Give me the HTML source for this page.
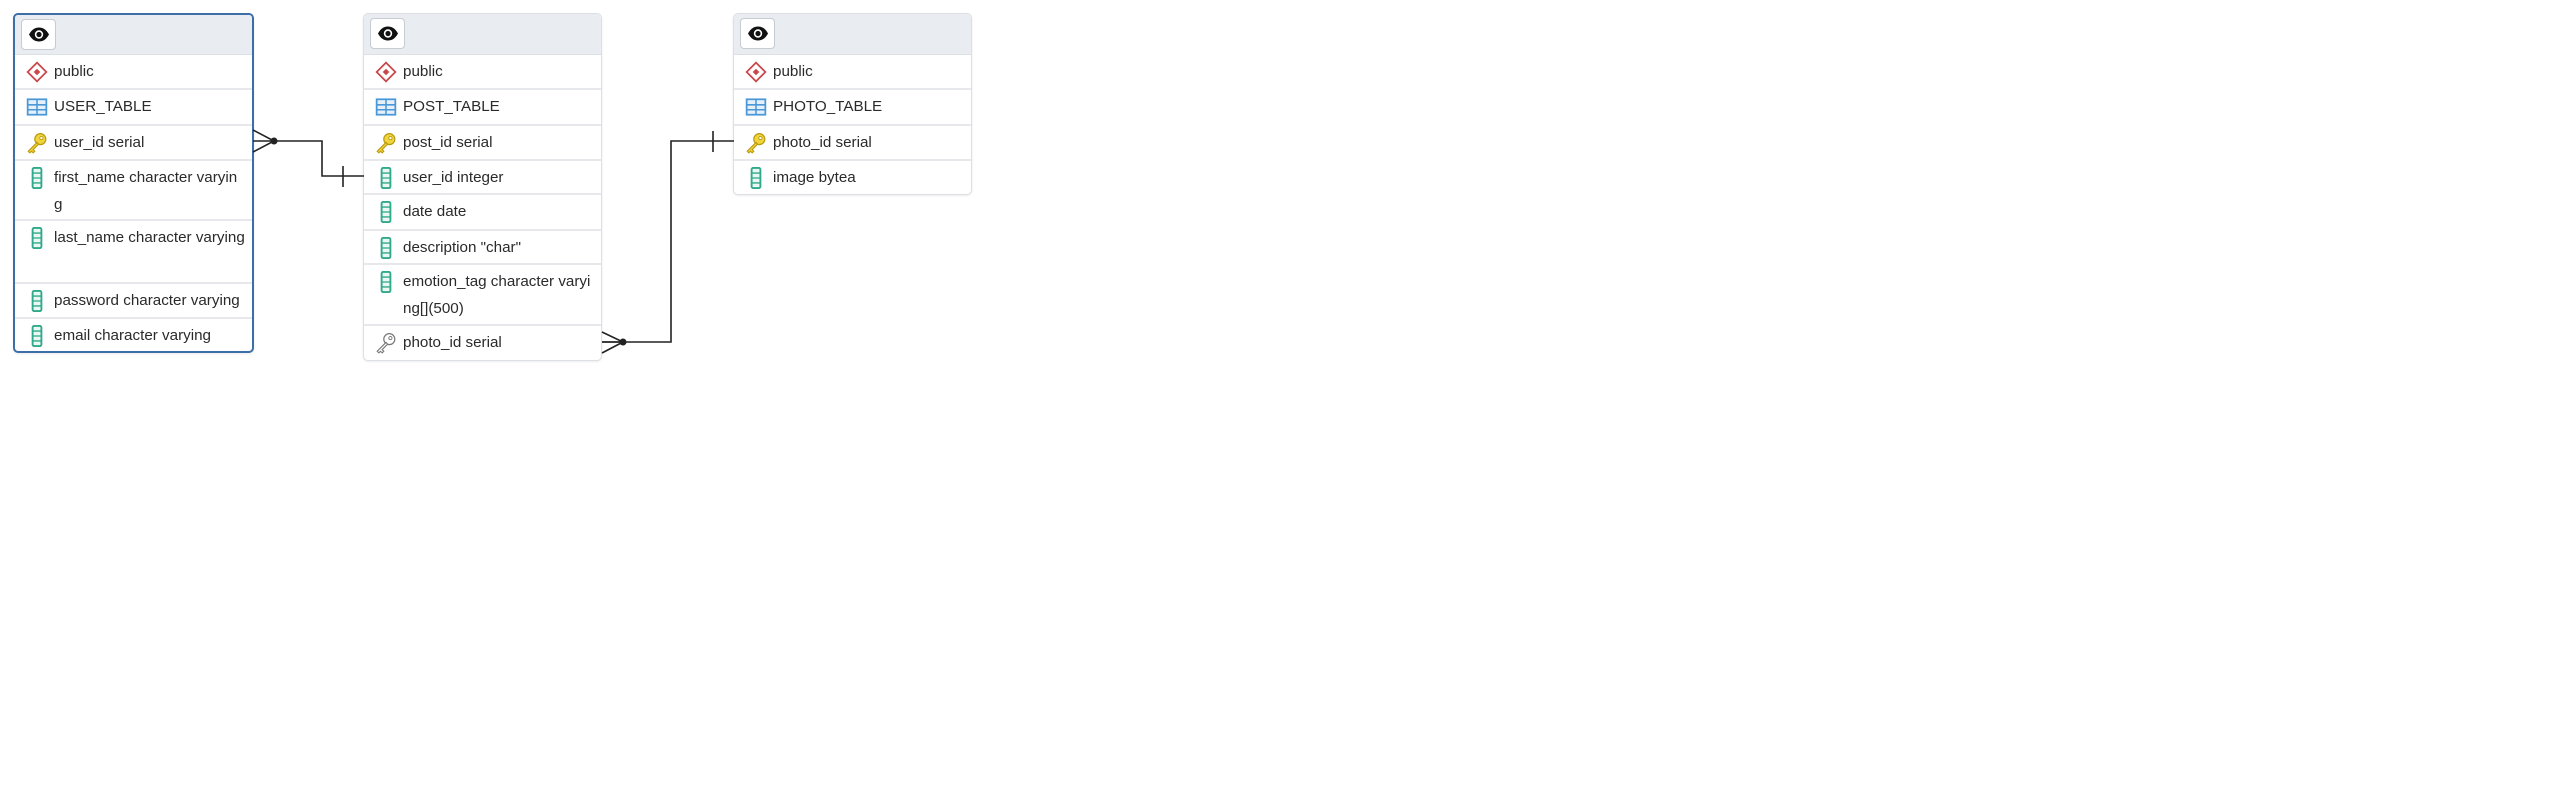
<!DOCTYPE html>
<html><head><meta charset="utf-8"><style>
body{margin:0;width:2563px;height:788px;background:#fff;position:relative;overflow:hidden;font-family:"Liberation Sans",sans-serif;}
.t{position:absolute;background:#fff;border:1px solid #dcdfe4;border-radius:5px;box-sizing:border-box;overflow:hidden;box-shadow:0 1px 2px rgba(0,0,0,.08)}
.t.sel{border:2px solid #3c6ea8}
.hd{height:40px;background:#e9ecf1;position:relative;border-bottom:1px solid #dcdfe4}
.eye{position:absolute;left:6px;top:4px;width:35px;height:31px;background:#fff;border:1px solid #c7cbd2;border-radius:4px;box-sizing:border-box}
.eye svg{position:absolute;left:6px;top:6px}
.r{position:relative;border-bottom:2px solid #e6e8ec;box-sizing:border-box;font-size:15.2px;color:#2a2a2a;}
.r:last-child{border-bottom:none}
.r .ic{position:absolute;left:11px;top:6px;width:22px;height:22px}
.r .tx{position:absolute;left:39px;top:3px;right:3px;line-height:27px;word-break:break-all}
</style></head><body>
<svg width="0" height="0" style="position:absolute">
<defs>
<symbol id="eye" viewBox="0 0 22 16"><path d="M1 8C4 2.5 7.5 1 11 1s7 1.5 10 7c-3 5.5-6.5 7-10 7S4 13.5 1 8z" fill="#111"/><circle cx="11" cy="8" r="4.2" fill="#fff"/><circle cx="11" cy="8" r="2.6" fill="#111"/></symbol>
<symbol id="sch" viewBox="0 0 20 20"><path d="M10 1.5L18.5 10 10 18.5 1.5 10z" fill="#fff" stroke="#c9484a" stroke-width="1.6"/><path d="M10 7L13 10 10 13 7 10z" fill="#c9484a"/></symbol>
<symbol id="tbl" viewBox="0 0 20 20"><rect x="1.5" y="3" width="17" height="14" fill="#e6f0fa" stroke="#4a98d8" stroke-width="1.6"/><path d="M1.5 8h17M1.5 12.5h17M10 3v14" stroke="#4a98d8" stroke-width="1.4"/></symbol>
<symbol id="key" viewBox="0 0 20 20"><circle cx="13" cy="6.5" r="5" fill="#f2d43c" stroke="#b89a10" stroke-width="1.1"/><circle cx="14" cy="5.5" r="1.5" fill="#fff" stroke="#b89a10" stroke-width=".8"/><path d="M10 9.5L2 17.5l1.5 1.5 1.5-1.5 1.5 1.5 1.5-1.5-1.5-1.5 1.5-1.5L11.5 11z" fill="#f2d43c" stroke="#b89a10" stroke-width="1"/></symbol>
<symbol id="fk" viewBox="0 0 20 20"><circle cx="13" cy="6.5" r="5" fill="#fff" stroke="#777" stroke-width="1.1"/><circle cx="14" cy="5.5" r="1.5" fill="#fff" stroke="#777" stroke-width=".8"/><path d="M10 9.5L2 17.5l1.5 1.5 1.5-1.5 1.5 1.5 1.5-1.5-1.5-1.5 1.5-1.5L11.5 11z" fill="#fff" stroke="#777" stroke-width="1"/></symbol>
<symbol id="col" viewBox="0 0 20 20"><rect x="6" y="0.8" width="8" height="18.4" rx="1.5" fill="#eaf7f2" stroke="#2fa98a" stroke-width="1.7"/><path d="M6 5.5h8M6 10h8M6 14.5h8" stroke="#2fa98a" stroke-width="1.2"/></symbol>
</defs></svg>

<!-- USER TABLE -->
<div class="t sel" style="left:13px;top:13px;width:241px;height:340px">
<div class="hd" style="height:39px"><div class="eye"><svg width="22" height="17"><use href="#eye"/></svg></div></div>
<div class="r" style="height:35px"><svg class="ic"><use href="#sch"/></svg><div class="tx">public</div></div>
<div class="r" style="height:36px"><svg class="ic"><use href="#tbl"/></svg><div class="tx">USER_TABLE</div></div>
<div class="r" style="height:35px"><svg class="ic"><use href="#key"/></svg><div class="tx">user_id serial</div></div>
<div class="r" style="height:60px"><svg class="ic"><use href="#col"/></svg><div class="tx">first_name character varyin<br>g</div></div>
<div class="r" style="height:63px"><svg class="ic"><use href="#col"/></svg><div class="tx">last_name character varying</div></div>
<div class="r" style="height:35px"><svg class="ic"><use href="#col"/></svg><div class="tx">password character varying</div></div>
<div class="r" style="height:35px"><svg class="ic"><use href="#col"/></svg><div class="tx">email character varying</div></div>
</div>

<!-- POST TABLE -->
<div class="t" style="left:363px;top:13px;width:239px;height:348px">
<div class="hd"><div class="eye"><svg width="22" height="17"><use href="#eye"/></svg></div></div>
<div class="r" style="height:35px"><svg class="ic"><use href="#sch"/></svg><div class="tx">public</div></div>
<div class="r" style="height:36px"><svg class="ic"><use href="#tbl"/></svg><div class="tx">POST_TABLE</div></div>
<div class="r" style="height:35px"><svg class="ic"><use href="#key"/></svg><div class="tx">post_id serial</div></div>
<div class="r" style="height:34px"><svg class="ic"><use href="#col"/></svg><div class="tx">user_id integer</div></div>
<div class="r" style="height:36px"><svg class="ic"><use href="#col"/></svg><div class="tx">date date</div></div>
<div class="r" style="height:34px"><svg class="ic"><use href="#col"/></svg><div class="tx">description "char"</div></div>
<div class="r" style="height:61px"><svg class="ic"><use href="#col"/></svg><div class="tx">emotion_tag character varyi<br>ng[](500)</div></div>
<div class="r" style="height:36px"><svg class="ic"><use href="#fk"/></svg><div class="tx">photo_id serial</div></div>
</div>

<!-- PHOTO TABLE -->
<div class="t" style="left:733px;top:13px;width:239px;height:182px">
<div class="hd"><div class="eye"><svg width="22" height="17"><use href="#eye"/></svg></div></div>
<div class="r" style="height:35px"><svg class="ic"><use href="#sch"/></svg><div class="tx">public</div></div>
<div class="r" style="height:36px"><svg class="ic"><use href="#tbl"/></svg><div class="tx">PHOTO_TABLE</div></div>
<div class="r" style="height:35px"><svg class="ic"><use href="#key"/></svg><div class="tx">photo_id serial</div></div>
<div class="r" style="height:35px"><svg class="ic"><use href="#col"/></svg><div class="tx">image bytea</div></div>
</div>

<svg style="position:absolute;left:0;top:0" width="2563" height="788">
<g stroke="#222" stroke-width="1.6" fill="none">
<path d="M274 141H322V176H364"/>
<path d="M253 130L274 141L253 152M253 141H274"/>
<path d="M343 166V187"/>
<path d="M602 342H671V141H734"/>
<path d="M602 332L623 342L602 353M602 342H623"/>
<path d="M713 131V152"/>
</g>
<circle cx="274" cy="141" r="3.5" fill="#222"/>
<circle cx="623" cy="342" r="3.5" fill="#222"/>
</svg>
</body></html>
